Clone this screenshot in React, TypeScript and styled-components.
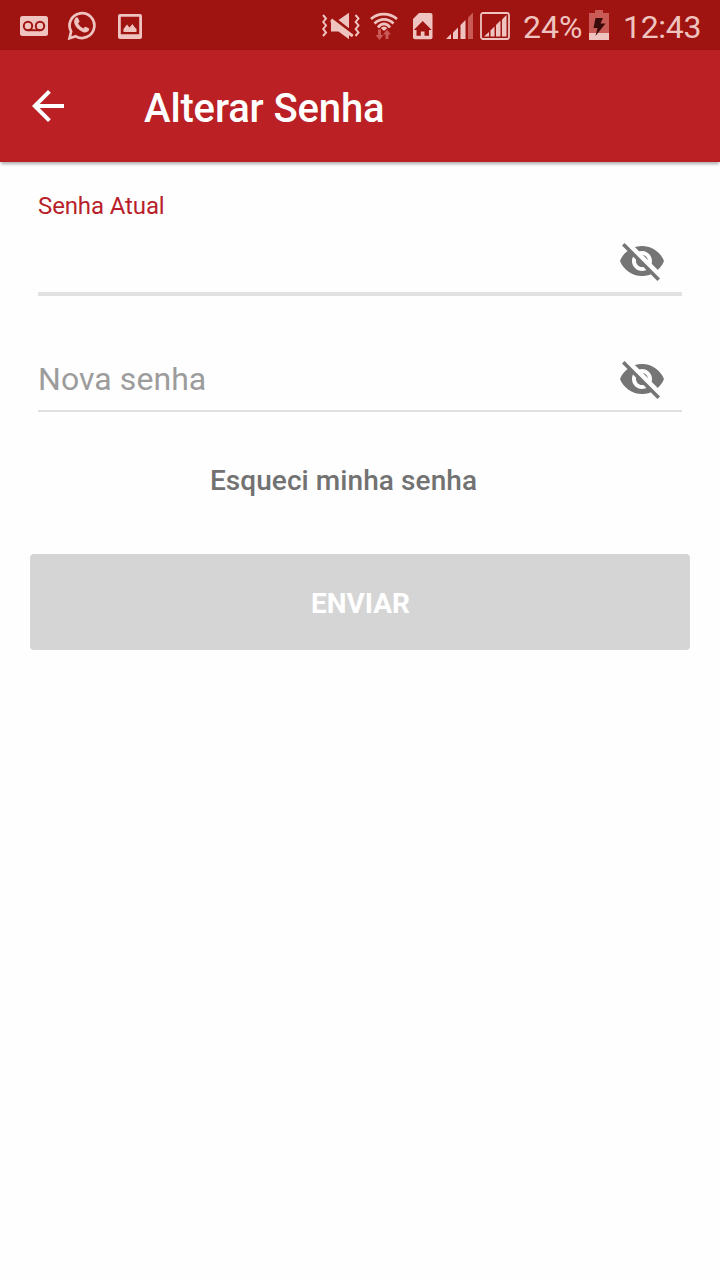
import React from 'react';
import styled, { createGlobalStyle } from 'styled-components';

const ICON = '#efc3bf';
const DIM = '#c95a56';
const BAR = '#9f1411';

const GlobalStyle = createGlobalStyle`
  * { box-sizing: border-box; }
  body { margin: 0; background: #fefefe; font-family: Roboto, sans-serif; }
`;

const Screen = styled.div`
  width: 720px;
  height: 1280px;
  display: flex;
  flex-direction: column;
  background: #fefefe;
  overflow: hidden;
`;

const StatusBar = styled.div`
  height: 50px;
  flex: none;
  display: flex;
  align-items: center;
  justify-content: space-between;
  padding: 0 18px 0 20px;
  background: ${BAR};
  color: ${ICON};
`;

const StatusGroup = styled.div`
  display: flex;
  align-items: center;
`;

const Glyph = styled.svg<{ $gap?: number; $drop?: number }>`
  display: block;
  flex: none;
  margin-top: ${p => p.$drop ?? 0}px;
  margin-right: ${p => p.$gap ?? 0}px;
`;

const StatusText = styled.span<{ $w: number; $gap?: number; $track?: number }>`
  width: ${p => p.$w}px;
  margin-right: ${p => p.$gap ?? 0}px;
  font-size: 32px;
  line-height: 38px;
  padding-top: 3px;
  letter-spacing: ${p => p.$track ?? 0}px;
  white-space: nowrap;
`;

const AppBar = styled.header`
  height: 112px;
  flex: none;
  display: flex;
  align-items: center;
  padding: 0 32px;
  background: #ba2024;
  color: #fff;
  box-shadow: 0 3px 3px -1px rgba(0, 0, 0, 0.32);
`;

const BackButton = styled.button`
  display: flex;
  width: 112px;
  padding: 0;
  border: 0;
  background: none;
  color: inherit;
`;

const Title = styled.h1`
  margin: 0;
  padding-top: 5px;
  font-size: 40px;
  line-height: 47px;
  font-weight: 500;
  letter-spacing: -0.14px;
`;

const Form = styled.main`
  display: flex;
  flex-direction: column;
  padding: 30px 30px 0;
`;

const Field = styled.label<{ $active?: boolean }>`
  display: flex;
  flex-direction: column;
  margin: 0 8px;
  height: ${p => (p.$active ? 104 : 116)}px;
  border-bottom: ${p => (p.$active ? 4 : 2)}px solid #e1e1e1;
`;

const FloatingLabel = styled.span`
  font-size: 24px;
  line-height: 28px;
  letter-spacing: -0.12px;
  color: #b91e2b;
`;

const InputRow = styled.div`
  display: flex;
  flex: 1;
  align-items: flex-end;
  justify-content: space-between;
  padding: 0 16px 7px 0;
`;

const Placeholder = styled.span`
  font-size: 32px;
  line-height: 38px;
  padding-bottom: 5px;
  letter-spacing: 0.07px;
  color: #9c9c9c;
`;

const ForgotLink = styled.a`
  align-self: center;
  margin: 52px 33px 0 0;
  font-size: 28px;
  line-height: 33px;
  font-weight: 500;
  letter-spacing: 0.08px;
  color: #727272;
`;

const SubmitButton = styled.button`
  height: 96px;
  margin-top: 57px;
  padding: 3px 0 0 1px;
  border: 0;
  border-radius: 4px;
  background: #d5d5d5;
  color: #fff;
  font: 700 28px/33px Roboto, sans-serif;
`;

const HiddenEye = () => (
  <Glyph width="48" height="48" viewBox="0 0 24 24" fill="#757575">
    <mask id="strikeGap">
      <rect width="24" height="24" fill="#fff" />
      <path d="M3.5 1.9 22.5 20.9" stroke="#000" strokeWidth="2.6" />
    </mask>
    <path
      mask="url(#strikeGap)"
      fillRule="evenodd"
      d="M12 4.5C7 4.5 2.73 7.61 1 12c1.73 4.39 6 7.5 11 7.5s9.27-3.11 11-7.5c-1.73-4.39-6-7.5-11-7.5zM12 17c-2.76 0-5-2.24-5-5s2.24-5 5-5 5 2.24 5 5-2.24 5-5 5zm0-8c-1.66 0-3 1.34-3 3s1.34 3 3 3 3-1.34 3-3-1.34-3-3-3z"
    />
    <path d="M3.27 3 2 4.27 19.73 22 21 20.73z" />
  </Glyph>
);

const Voicemail = () => (
  <Glyph $gap={19} $drop={2} width="28" height="22" viewBox="0 0 28 22">
    <rect y="1" width="28" height="20" rx="2.5" fill={ICON} />
    <g fill="none" stroke={BAR} strokeWidth="2">
      <circle cx="8" cy="11" r="4.2" />
      <circle cx="20" cy="11" r="4.2" />
      <path d="M8 15.2H20" />
    </g>
  </Glyph>
);

const WhatsApp = () => (
  <Glyph $gap={21} width="30" height="32" viewBox="0 0 30 32">
    <path
      d="M2.5 29.2 4.1 22.5A12.4 12.4 0 1 1 8.8 27.3Z"
      fill="none"
      stroke={ICON}
      strokeWidth="2.7"
    />
    <path
      fill={ICON}
      d="M8.8 8.8c.7-.6 1.8-.6 2.2.2l1.400 3c.2.6-.1 1.100-1.300 2.400 1.200 2.300 3 4 5.400 5 .9-1 1.400-1.900 2.100-1.700l3.100 1.500c.8.4.4 2.300-.5 3.100-1.300 1.200-3.300 1.500-5.500.6C11.400 21.200 8.400 17.900 7.400 14.500c-.6-2.300-.1-4.500 1.400-5.700z"
    />
  </Glyph>
);

const Picture = () => (
  <Glyph $drop={3} width="24" height="25" viewBox="0 0 24 25">
    <path
      fill={ICON}
      fillRule="evenodd"
      d="M2 0H22Q24 0 24 2V23Q24 25 22 25H2Q0 25 0 23V2Q0 0 2 0ZM2.800 2.800V20.300H21.200V2.800Z"
    />
    <path fill={ICON} d="M5.500 18V15L9 10.500 11.500 13.500 14.500 10 16.500 13 18.500 15V18Z" />
  </Glyph>
);

const MutedVibrate = () => (
  <Glyph $gap={10} $drop={2} width="38" height="28" viewBox="0 0 38 28">
    <g fill="none" stroke={ICON} strokeWidth="2">
      <path d="M1 3 4 6.500 1.200 10 4 13.500 1.200 17 4 20.500 1 24" />
      <path d="M33.500 3 36.500 6.500 33.700 10 36.500 13.500 33.700 17 36.500 20.500 33.500 24" />
    </g>
    <path fill={ICON} d="M16.500 8 27 .8V16.200Z" />
    <path fill={ICON} d="M10 6.500 31.500 22.800 30 25.200 27 23.200V27.200L16.500 19.500H9V11L8.300 9Z" />
  </Glyph>
);

const Wifi = () => (
  <Glyph $gap={15} $drop={2} width="28" height="28" viewBox="0 0 28 28">
    <g fill="none" stroke={ICON} strokeWidth="2.700">
      <path d="M1 7C8 .400 19.500 .400 27 7" />
      <path d="M4.500 11.500C10 6 18 6 23.500 11.500" />
      <path d="M8 15.500C11.500 10.700 16.500 10.700 20 15.500" />
    </g>
    <path fill={ICON} d="M10.700 16Q14 13 17.300 16L14 19Z" />
    <g fill={DIM}>
      <path d="M8 17.500H11V23H13.500L9.500 28 5.500 23H8Z" />
      <path d="M15.500 27H18.500V22.500H21L17 17.500 13 22.500H15.500Z" />
    </g>
  </Glyph>
);

const SimHome = () => (
  <Glyph $gap={13} $drop={2} width="20" height="28" viewBox="0 0 20 28">
    <path fill={ICON} d="M6 1H17.500Q19.500 1 19.500 3V25.300Q19.500 27.300 17.500 27.300H2Q0 27.300 0 25.300V7Z" />
    <path fill={BAR} d="M9.700 9 18.700 18H16V23.700H11.500V19.500H7.800V23.700H3.500V18H.8Z" />
  </Glyph>
);

const Signal = () => (
  <Glyph $gap={6} $drop={2} width="28" height="28" viewBox="0 0 28 28">
    <g fill={ICON}>
      <path d="M0 27 5 22V27Z" />
      <path d="M7 20.500 12 15.500V27H7Z" />
      <path d="M14.500 13 19.500 8V27H14.500Z" />
    </g>
    <path fill={DIM} d="M22 5.500 27 .5V27H22Z" />
  </Glyph>
);

const BoxedSignal = () => (
  <Glyph $gap={13} $drop={2} width="30" height="28" viewBox="0 0 30 28">
    <rect x="1" y="1" width="28" height="26" rx="2" fill="none" stroke={ICON} strokeWidth="1.800" />
    <g fill={ICON}>
      <path d="M4 24.500 9 20V24.500Z" />
      <path d="M10.500 18.500 14.500 14.500V24.500H10.500Z" />
      <path d="M16 13 20.500 8.500V24.500H16Z" />
      <path d="M22 7.500 26.500 3V24.500H22Z" />
    </g>
  </Glyph>
);

const Battery = () => (
  <Glyph $gap={14} width="20" height="30" viewBox="0 0 20 30">
    <path fill={DIM} d="M6 0H14V3H20V23H0V3H6Z" />
    <path fill={ICON} d="M0 23H20V30H0Z" />
    <path fill="#3b0b0b" d="M6.500 8H14L11.500 13.500H16.500L6.500 26 8.500 18H4.500Z" />
  </Glyph>
);

export default function App() {
  return (
    <>
      <GlobalStyle />
      <Screen>
        <StatusBar>
          <StatusGroup>
            <Voicemail />
            <WhatsApp />
            <Picture />
          </StatusGroup>
          <StatusGroup>
            <MutedVibrate />
            <Wifi />
            <SimHome />
            <Signal />
            <BoxedSignal />
            <StatusText $w={58} $gap={8}>24%</StatusText>
            <Battery />
            <StatusText $w={79} $track={-0.3}>12:43</StatusText>
          </StatusGroup>
        </StatusBar>
        <AppBar>
          <BackButton aria-label="Voltar">
            <Glyph width="32" height="32" viewBox="4 4 16 16" fill="currentColor">
              <path d="M20 11H7.830l5.590-5.590L12 4l-8 8 8 8 1.410-1.410L7.830 13H20z" />
            </Glyph>
          </BackButton>
          <Title>Alterar Senha</Title>
        </AppBar>
        <Form>
          <Field $active>
            <FloatingLabel>Senha Atual</FloatingLabel>
            <InputRow>
              <span />
              <HiddenEye />
            </InputRow>
          </Field>
          <Field>
            <InputRow>
              <Placeholder>Nova senha</Placeholder>
              <HiddenEye />
            </InputRow>
          </Field>
          <ForgotLink>Esqueci minha senha</ForgotLink>
          <SubmitButton>ENVIAR</SubmitButton>
        </Form>
      </Screen>
    </>
  );
}
